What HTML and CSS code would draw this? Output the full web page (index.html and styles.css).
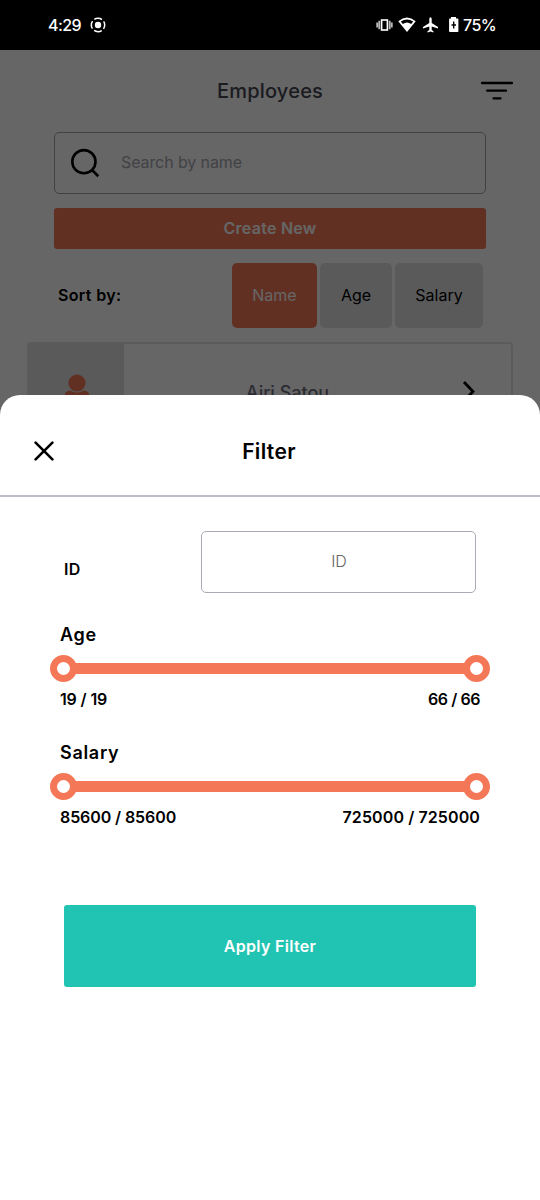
FILE: index.html
```html
<!DOCTYPE html>
<html lang="en">
<head>
<meta charset="utf-8">
<title>Employees</title>
<link rel="stylesheet" href="styles.css">
</head>
<body>
<div class="status-bar">
  <span class="clock">4:29</span>
  <svg class="cast" width="16" height="16" viewBox="0 0 16 16"><circle cx="8" cy="8" r="3.2" fill="#fff"/><circle cx="8" cy="8" r="6.7" fill="none" stroke="#fff" stroke-width="1.5" stroke-dasharray="8.1 2.425" stroke-dashoffset="4.05"/></svg>
  <svg class="status-icons" width="100" height="18" viewBox="0 0 100 18">
    <rect x="5.600" y="4" width="5.800" height="10" fill="none" stroke="#fff" stroke-width="1.600"/><path d="M3.300 4.800v8.400M13.700 4.800v8.400M1.200 6.500v5M15.800 6.500v5" fill="none" stroke="#bbb" stroke-width="1.800"/>
    <path d="M31 16 22.3 5.2Q31-2.2 39.7 5.2Z" fill="#fff"/><path d="M24.8 5.600Q31 1.600 37.200 5.600L35.200 8Q31 4.800 26.800 8Z" fill="#000"/>
    <path d="M54.500 1.300q1.200 0 1.200 1.600v4l6.300 4v1.500l-6.300-2v3.600l1.800 1.300v1.200l-3-.9-3 .9v-1.200l1.800-1.300v-3.600l-6.300 2v-1.500l6.300-4v-4q0-1.600 1.200-1.600z" fill="#fff"/>
    <path d="M75 2.600v-1.600h5v1.600h1.600q.8 0 .8.8v11.800q0 .8-.8.800h-7.700q-.8 0-.8-.8V3.400q0-.8.8-.8z" fill="#fff"/><path d="M77.700 5.500v7M75.500 9h4.500" stroke="#000" stroke-width="1.400"/>
  </svg>
  <span class="battery">75%</span>
</div>
<main class="screen">
  <header class="topbar">
    <h1 class="title">Employees</h1>
    <svg class="filter-icon" width="34" height="20" viewBox="0 0 34 20"><path d="M2 2h30M7.200 9.700h18.800M13.500 17.300h7" stroke="#000" stroke-width="2.300" stroke-linecap="round"/></svg>
  </header>
  <div class="search">
    <svg width="30" height="30" viewBox="0 0 30 30" fill="none" stroke="#000" stroke-width="2.600"><circle cx="13.900" cy="13.700" r="11.600"/><path d="M22 22l6.300 6.200"/></svg>
    <span class="search-text">Search by name</span>
  </div>
  <div class="create">Create New</div>
  <div class="sort">
    <span class="sort-label">Sort by:</span>
    <div class="chip chip-name">Name</div>
    <div class="chip chip-age">Age</div>
    <div class="chip chip-salary">Salary</div>
  </div>
  <div class="card">
    <div class="avatar"><svg width="28" height="38" viewBox="0 0 28 38" fill="#f47857"><circle cx="14" cy="9" r="8.600"/><path d="M1.500 38V23Q1.500 16.500 7 16.500Q14 20.500 21 16.500Q26.500 16.500 26.500 23V38Z"/></svg></div>
    <span class="person">Airi Satou</span>
    <svg class="chevron" width="14" height="24" viewBox="0 0 14 24"><path d="M2 2l9 9.500L2 21" fill="none" stroke="#000" stroke-width="2.800"/></svg>
  </div>
  <div class="scrim"></div>
</main>
<section class="sheet">
  <header class="sheet-head">
    <svg width="20" height="20" viewBox="0 0 20 20"><path d="M1.600 1.600l16.800 16.800M18.400 1.600L1.600 18.400" stroke="#000" stroke-width="2.600" stroke-linecap="round"/></svg>
    <h2 class="sheet-title">Filter</h2>
  </header>
  <div class="id-row"><span class="id-label">ID</span><div class="id-input">ID</div></div>
  <div class="range">
    <h3 class="range-title age-title">Age</h3>
    <div class="slider"><i class="thumb"></i><i class="thumb"></i></div>
    <div class="values"><span class="v1">19 / 19</span><span class="v2">66 / 66</span></div>
  </div>
  <div class="range">
    <h3 class="range-title salary-title">Salary</h3>
    <div class="slider"><i class="thumb"></i><i class="thumb"></i></div>
    <div class="values"><span class="v3">85600 / 85600</span><span class="v4">725000 / 725000</span></div>
  </div>
  <div class="apply">Apply Filter</div>
</section>
</body>
</html>
```
FILE: styles.css
```css
* { box-sizing: border-box; }
body { margin: 0; width: 540px; height: 1200px; overflow: hidden; position: relative; background: #fff; color: #000; font-family: Inter, Roboto, sans-serif; }
h1, h2, h3 { margin: 0; }
svg { display: block; flex: none; }
span, h1, h2, h3 { white-space: nowrap; }
.status-bar { height: 50px; background: #000; color: #fff; display: flex; align-items: center; padding: 0 44px 0 48px; font-size: 16px; font-weight: 500; }
.clock { width: 42px; letter-spacing: -.6px; }
.status-icons { margin: 0 0 0 270px; }
.battery { margin-left: -13px; letter-spacing: -.6px; }
.screen { position: relative; height: 1150px; overflow: hidden; }
.scrim { position: absolute; inset: 0; background: rgba(0, 0, 0, .6); }
.topbar { height: 82px; display: grid; grid-template-columns: 60px 1fr 60px; align-items: center; }
.title { grid-column: 2; text-align: center; font-size: 20px; font-weight: 500; color: #454552; letter-spacing: .2px; }
.filter-icon { margin-left: 0; }
.search { height: 62px; margin: 0 54px; border: 1.500px solid #a5a5b0; border-radius: 5px; display: flex; align-items: center; gap: 21px; padding-left: 15px; }
.search-text { font-size: 16px; color: #a5a5b0; letter-spacing: -.1px; padding-bottom: 2px; }
.create { height: 41px; margin: 14px 54px 0; background: #f47857; border-radius: 3px; color: #fff; font-size: 16px; font-weight: 600; letter-spacing: .25px; padding-bottom: 2px; display: flex; align-items: center; justify-content: center; }
.sort { height: 65px; margin: 14px 57px 0 58px; display: flex; align-items: center; gap: 3px; font-size: 16px; }
.sort-label { font-weight: 600; flex: 1; letter-spacing: .35px; padding-bottom: 2px; }
.chip { height: 65px; background: #e1e1e1; border-radius: 5px; padding-bottom: 2px; display: flex; align-items: center; justify-content: center; }
.chip-name { width: 85px; background: #f47857; color: #fff; }
.chip-age { width: 72px; }
.chip-salary { width: 88px; }
.card { height: 100px; margin: 14px 27px 0; border: 2px solid #e4e4e4; border-radius: 4px; display: flex; align-items: center; }
.avatar { width: 95px; height: 100%; background: #e1e1e1; display: flex; align-items: center; justify-content: center; padding-top: 2px; }
.person { flex: 1; text-align: center; font-size: 18px; font-weight: 500; color: #6f6f80; padding-right: 11px; }
.chevron { margin-right: 35px; }
.sheet { position: absolute; left: 0; right: 0; top: 395px; height: 805px; background: #fff; border-radius: 20px 20px 0 0; }
.sheet-head { height: 102px; border-bottom: 2px solid #bdbdc5; display: grid; grid-template-columns: 20px 1fr 20px; align-items: center; padding: 12px 34px 0; }
.sheet-title { text-align: center; font-size: 21px; font-weight: 600; letter-spacing: .35px; padding-right: 2px; }
.id-row { display: flex; align-items: center; justify-content: space-between; padding: 34px 64px 0; }
.id-label { font-size: 16px; font-weight: 600; letter-spacing: .2px; padding-top: 14px; }
.id-input { width: 275px; height: 62px; border: 1.500px solid #aaaab4; border-radius: 5px; display: flex; align-items: center; justify-content: center; font-size: 16px; font-weight: 300; color: #666; padding: 0 0 2px 1px; }
.range { height: 118px; padding: 30px 60px 0; }
.range-title { font-size: 18px; font-weight: 600; line-height: 24px; letter-spacing: .7px; }
.slider { height: 11px; background: #f47857; margin-top: 16px; display: flex; align-items: center; justify-content: space-between; }
.thumb { flex: none; width: 27px; height: 27px; border: 7px solid #f47857; border-radius: 50%; background: #fff; margin: 0 -10px; }
.values { display: flex; justify-content: space-between; font-size: 16px; font-weight: 600; line-height: 20px; margin-top: 15px; }
.v1 { letter-spacing: -.15px; }
.v2 { letter-spacing: -.45px; }
.v3 { letter-spacing: -.1px; }
.v4 { letter-spacing: .1px; }
.apply { height: 82px; margin: 76px 64px 0; background: #21c4b2; border-radius: 3px; color: #fff; font-size: 16px; font-weight: 600; letter-spacing: .3px; display: flex; align-items: center; justify-content: center; }
```
